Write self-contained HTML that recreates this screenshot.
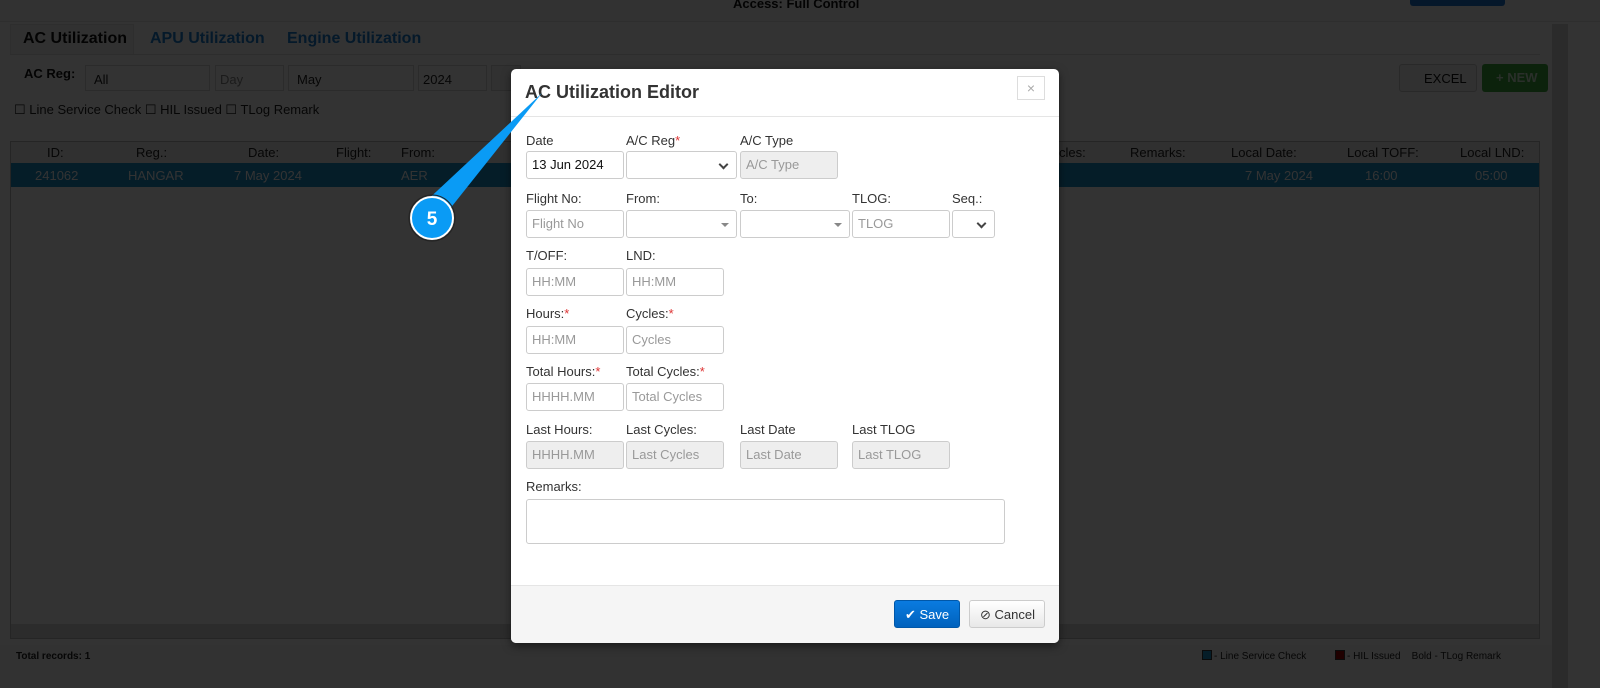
<!DOCTYPE html>
<html><head><meta charset="utf-8"><style>
*{box-sizing:border-box;margin:0;padding:0}
html,body{width:1600px;height:688px;background:#fff;font-family:"Liberation Sans",sans-serif;position:relative;overflow:hidden}
.a{position:absolute}
.lbl{position:absolute;font-size:13px;color:#333}
.lbl i{color:#d33;font-style:normal}
.in{position:absolute;height:28px;border:1px solid #ccc;border-radius:3px;background:#fff;font-size:13px;color:#999;padding:6px 5px;line-height:14px}
.dis{background:#eee}
.sel::after{content:"";position:absolute;right:9px;top:9px;width:5px;height:5px;border-right:2px solid #444;border-bottom:2px solid #444;transform:rotate(45deg)}
.tri::after{content:"";position:absolute;right:7px;top:12px;border:4px solid transparent;border-top:4px solid #888}
.d{color:#111;font-size:13px}
.bg-t{color:#222;font-size:13px}
.w{color:#fff;font-size:13px}
</style></head><body>
<!-- underlying page -->
<div class="a" style="left:0;top:0;width:1600px;height:22px;background:#fafafa;border-bottom:1px solid #e5e5e5"></div>
<div class="a" style="left:733px;top:-4px;font-size:13px;font-weight:bold;color:#111">Access: Full Control</div>
<div class="a" style="left:1410px;top:-4px;width:95px;height:10px;background:#1a73d0;border-radius:3px"></div>
<div class="a" style="left:1552px;top:24px;width:16px;height:664px;background:#d8d8d8"></div>
<div class="a" style="left:10px;top:24px;width:124px;height:31px;background:#f4f4f4;border:1px solid #e5e5e5;border-bottom:none"></div>
<div class="a" style="left:10px;top:54px;width:1530px;height:1px;background:#e0e0e0"></div>
<div class="a" style="left:23px;top:30px;font-size:16px;font-weight:bold;color:#111">AC Utilization</div>
<div class="a" style="left:150px;top:30px;font-size:16px;font-weight:bold;color:#1a7fd0">APU Utilization</div>
<div class="a" style="left:287px;top:30px;font-size:16px;font-weight:bold;color:#1a7fd0">Engine Utilization</div>
<div class="a" style="left:24px;top:66px;font-size:13px;font-weight:bold;color:#111">AC Reg:</div>
<div class="a" style="left:85px;top:65px;width:125px;height:26px;border:1px solid #d5d5d5;background:#fff;font-size:13px;color:#222;padding:6px 8px">All</div>
<div class="a" style="left:215px;top:65px;width:69px;height:26px;border:1px solid #d5d5d5;background:#fff;font-size:13px;color:#888;padding:6px 4px">Day</div>
<div class="a" style="left:288px;top:65px;width:126px;height:26px;border:1px solid #d5d5d5;background:#fff;font-size:13px;color:#222;padding:6px 8px">May</div>
<div class="a" style="left:418px;top:65px;width:69px;height:26px;border:1px solid #d5d5d5;background:#fff;font-size:13px;color:#222;padding:6px 4px">2024</div>
<div class="a" style="left:491px;top:65px;width:30px;height:26px;border:1px solid #d5d5d5;background:#f2f2f2"></div>
<div class="a" style="left:1399px;top:64px;width:78px;height:28px;border:1px solid #ccc;background:#f2f2f2;border-radius:3px;font-size:13px;color:#111;padding:6px 0 0 24px">EXCEL</div>
<div class="a" style="left:1482px;top:64px;width:66px;height:28px;background:#3caa3c;border-radius:3px;font-size:13px;font-weight:bold;color:#cfe8cf;padding:6px 0 0 14px">+ NEW</div>
<div class="a" style="left:14px;top:102px;font-size:13px;color:#222">☐ Line Service Check ☐ HIL Issued ☐ TLog Remark</div>
<div class="a" style="left:10px;top:141px;width:1530px;height:498px;border:1px solid #bbb;background:#fff"></div>
<div class="a" style="left:11px;top:142px;width:1528px;height:21px;background:#f0f0f0"></div>
<div class="a bg-t" style="left:47px;top:145px">ID:</div>
<div class="a bg-t" style="left:136px;top:145px">Reg.:</div>
<div class="a bg-t" style="left:248px;top:145px">Date:</div>
<div class="a bg-t" style="left:336px;top:145px">Flight:</div>
<div class="a bg-t" style="left:401px;top:145px">From:</div>
<div class="a bg-t" style="left:1059px;top:145px">cles:</div>
<div class="a bg-t" style="left:1130px;top:145px">Remarks:</div>
<div class="a bg-t" style="left:1231px;top:145px">Local Date:</div>
<div class="a bg-t" style="left:1347px;top:145px">Local TOFF:</div>
<div class="a bg-t" style="left:1460px;top:145px">Local LND:</div>
<div class="a" style="left:11px;top:163px;width:1528px;height:24px;background:#1a8fc8"></div>
<div class="a w" style="left:35px;top:168px">241062</div>
<div class="a w" style="left:128px;top:168px">HANGAR</div>
<div class="a w" style="left:234px;top:168px">7 May 2024</div>
<div class="a w" style="left:401px;top:168px">AER</div>
<div class="a w" style="left:1245px;top:168px">7 May 2024</div>
<div class="a w" style="left:1365px;top:168px">16:00</div>
<div class="a w" style="left:1475px;top:168px">05:00</div>
<div class="a" style="left:11px;top:624px;width:1528px;height:14px;background:#dcdcdc"></div>
<div class="a" style="left:0;top:645px;width:1552px;height:43px;background:#f7f7f7"></div>
<div class="a" style="left:16px;top:651px;font-size:10px;font-weight:bold;color:#222">Total records: 1</div>
<div class="a" style="left:1202px;top:650px;width:10px;height:10px;background:#1a8fc8;border:1px solid #333"></div>
<div class="a" style="left:1214px;top:651px;font-size:10px;color:#222">- Line Service Check</div>
<div class="a" style="left:1335px;top:650px;width:10px;height:10px;background:#900;border:1px solid #333"></div>
<div class="a" style="left:1347px;top:651px;font-size:10px;color:#222">- HIL Issued &nbsp;&nbsp; Bold - TLog Remark</div>

<!-- overlay -->
<div class="a" style="left:0;top:0;width:1600px;height:688px;background:rgba(0,0,0,0.8)"></div>

<!-- modal -->
<div class="a" style="left:511px;top:69px;width:548px;height:574px;background:#fff;border-radius:5px;overflow:hidden;box-shadow:0 3px 9px rgba(0,0,0,.5)">
 <div class="a" style="left:0;top:47px;width:548px;height:1px;background:#e5e5e5"></div>
 <div class="a" style="left:0;top:516px;width:548px;height:58px;background:#f5f5f5;border-top:1px solid #e5e5e5"></div>
</div>
<div class="a" style="left:525px;top:82px;font-size:18px;font-weight:bold;color:#333">AC Utilization Editor</div>
<div class="a" style="left:1017px;top:76px;width:28px;height:24px;border:1px solid #ddd;color:#aaa;font-size:14px;text-align:center;line-height:22px">×</div>

<div class="lbl" style="left:526px;top:133px">Date</div>
<div class="lbl" style="left:626px;top:133px">A/C Reg<i>*</i></div>
<div class="lbl" style="left:740px;top:133px">A/C Type</div>
<div class="in d" style="left:526px;top:151px;width:98px">13 Jun 2024</div>
<div class="in sel" style="left:626px;top:151px;width:111px"></div>
<div class="in dis" style="left:740px;top:151px;width:98px">A/C Type</div>

<div class="lbl" style="left:526px;top:191px">Flight No:</div>
<div class="lbl" style="left:626px;top:191px">From:</div>
<div class="lbl" style="left:740px;top:191px">To:</div>
<div class="lbl" style="left:852px;top:191px">TLOG:</div>
<div class="lbl" style="left:952px;top:191px">Seq.:</div>
<div class="in" style="left:526px;top:210px;width:98px">Flight No</div>
<div class="in tri" style="left:626px;top:210px;width:111px"></div>
<div class="in tri" style="left:740px;top:210px;width:110px"></div>
<div class="in" style="left:852px;top:210px;width:98px">TLOG</div>
<div class="in sel" style="left:952px;top:210px;width:43px"></div>

<div class="lbl" style="left:526px;top:248px">T/OFF:</div>
<div class="lbl" style="left:626px;top:248px">LND:</div>
<div class="in" style="left:526px;top:268px;width:98px">HH:MM</div>
<div class="in" style="left:626px;top:268px;width:98px">HH:MM</div>

<div class="lbl" style="left:526px;top:306px">Hours:<i>*</i></div>
<div class="lbl" style="left:626px;top:306px">Cycles:<i>*</i></div>
<div class="in" style="left:526px;top:326px;width:98px">HH:MM</div>
<div class="in" style="left:626px;top:326px;width:98px">Cycles</div>

<div class="lbl" style="left:526px;top:364px">Total Hours:<i>*</i></div>
<div class="lbl" style="left:626px;top:364px">Total Cycles:<i>*</i></div>
<div class="in" style="left:526px;top:383px;width:98px">HHHH.MM</div>
<div class="in" style="left:626px;top:383px;width:98px">Total Cycles</div>

<div class="lbl" style="left:526px;top:422px">Last Hours:</div>
<div class="lbl" style="left:626px;top:422px">Last Cycles:</div>
<div class="lbl" style="left:740px;top:422px">Last Date</div>
<div class="lbl" style="left:852px;top:422px">Last TLOG</div>
<div class="in dis" style="left:526px;top:441px;width:98px">HHHH.MM</div>
<div class="in dis" style="left:626px;top:441px;width:98px">Last Cycles</div>
<div class="in dis" style="left:740px;top:441px;width:98px">Last Date</div>
<div class="in dis" style="left:852px;top:441px;width:98px">Last TLOG</div>

<div class="lbl" style="left:526px;top:479px">Remarks:</div>
<div class="in" style="left:526px;top:499px;width:479px;height:45px"></div>

<div class="a" style="left:894px;top:600px;width:66px;height:28px;background:linear-gradient(#0a7be0,#0062bd);border:1px solid #0057a8;border-radius:3px;color:#fff;font-size:13px;padding:6px 0 0 10px">✔ Save</div>
<div class="a" style="left:969px;top:600px;width:76px;height:28px;background:linear-gradient(#fff,#e8e8e8);border:1px solid #ccc;border-radius:3px;color:#333;font-size:13px;padding:6px 0 0 10px">⊘ Cancel</div>

<svg class="a" style="left:0;top:0" width="1600" height="688">
 <polygon points="542,93 422,205 445,215" fill="#0a9bf5"/>
 <circle cx="432" cy="218" r="21" fill="#0a9bf5" stroke="#fff" stroke-width="2"/>
 <circle cx="432" cy="218" r="23" fill="none" stroke="#222" stroke-width="1"/>
 <text x="432" y="225" text-anchor="middle" font-family="Liberation Sans" font-weight="bold" font-size="19" fill="#fff">5</text>
</svg>
</body></html>
